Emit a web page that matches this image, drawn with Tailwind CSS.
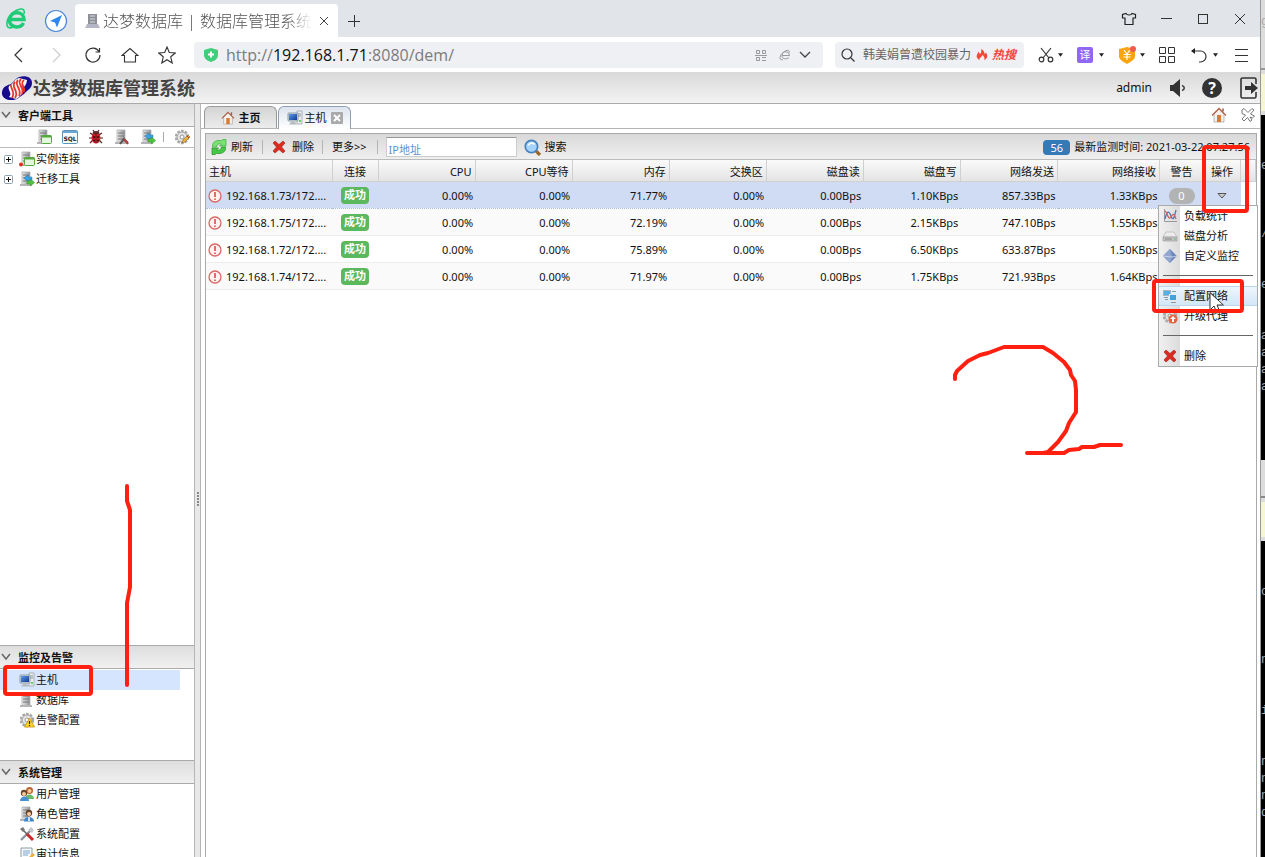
<!DOCTYPE html>
<html lang="zh-CN">
<head>
<meta charset="utf-8">
<title>达梦数据库 | 数据库管理系统</title>
<script src="https://cdn.jsdelivr.net/npm/@tailwindcss/browser@4"></script>
</head>
<body class="flex h-screen overflow-hidden bg-white font-['Noto_Sans','Noto_Sans_CJK_SC',sans-serif] text-[11px] leading-4 text-[#111]">

<svg class="absolute size-0" aria-hidden="true">
  <defs>
    <linearGradient id="steel" x1="0" x2="1"><stop offset="0" stop-color="#e8e8e8"/><stop offset="1" stop-color="#8e9297"/></linearGradient>
    <linearGradient id="screen" x1="0" x2="1" y1="0" y2="1"><stop offset="0" stop-color="#5b9be8"/><stop offset="1" stop-color="#123a94"/></linearGradient>
  </defs>
  <symbol id="server" viewBox="0 0 16 16"><path d="M3 1h8v13H3z" fill="url(#steel)" stroke="#a5a8ac" stroke-width=".7"/><path d="M4 4h6M4 7h6M4 10h6" stroke="#777" stroke-width="1"/><path d="M1 14h12" stroke="#b5b5b5" stroke-width="2"/></symbol>
  <symbol id="server-window" viewBox="0 0 16 16"><use href="#server"/><rect x="5.500" y="6.500" width="10" height="8" rx="1" fill="#e4f6df" stroke="#54a83c"/><path d="M5.500 7.500h10" stroke="#54a83c" stroke-width="2"/></symbol>
  <symbol id="server-window-off" viewBox="0 0 16 16"><use href="#server-window"/><circle cx="2" cy="13.500" r="2" fill="#e0301e"/></symbol>
  <symbol id="server-move" viewBox="0 0 16 16"><use href="#server"/><path d="M5 7l4-3v2h4v3H9v2z" fill="#3ba4e4" stroke="#1c79b8" stroke-width=".5"/><path d="M15.500 11.500l-4-3.500v2H8v3h3.500v2z" fill="#4fc63d" stroke="#2b8e20" stroke-width=".5"/></symbol>
  <symbol id="server-tool" viewBox="0 0 16 16"><use href="#server"/><path d="M6 15l4-5 4 4" fill="none" stroke="#555" stroke-width="2"/><path d="M10 10l4 5" stroke="#b53c35" stroke-width="2"/></symbol>
  <symbol id="sql" viewBox="0 0 16 16"><rect x=".5" y="1.500" width="15" height="13" rx="1" fill="#f4f8fb" stroke="#5f93b6"/><path d="M1 3h14" stroke="#69a7d4" stroke-width="2"/><text x="8" y="11.500" font-size="6" font-weight="700" text-anchor="middle" fill="#222" font-family="DejaVu Sans, sans-serif">SQL</text></symbol>
  <symbol id="bug" viewBox="0 0 16 16"><path d="M2 4l3 2M14 4l-3 2M1 9h14M2 14l3-3M14 14l-3-3M5 1l2 3M11 1L9 4" stroke="#5a2020" stroke-width="1.200"/><ellipse cx="8" cy="9" rx="4.500" ry="5.500" fill="#c9202a"/><path d="M4.500 5a3.500 3 0 0 1 7 0z" fill="#5d2b2b"/><path d="M8 5v9" stroke="#681016"/><circle cx="6" cy="8" r="1" fill="#350808"/><circle cx="10" cy="8" r="1" fill="#350808"/><circle cx="6" cy="11.500" r="1" fill="#350808"/><circle cx="10" cy="11.500" r="1" fill="#350808"/></symbol>
  <symbol id="gear" viewBox="0 0 16 16"><circle cx="8" cy="8" r="6" fill="none" stroke="#a9a9a9" stroke-width="2.500" stroke-dasharray="2.600 1.200"/><circle cx="8" cy="8" r="5" fill="#e5e5e5" stroke="#a1a1a1"/><circle cx="8" cy="8" r="2" fill="#fff" stroke="#999"/></symbol>
  <symbol id="gear-edit" viewBox="0 0 16 16"><use href="#gear"/><path d="M8 14l1-3 5-5 2 2-5 5z" fill="#e9b13f" stroke="#8d6724" stroke-width=".6"/><path d="M13 7l2 2" stroke="#c33" stroke-width="1"/></symbol>
  <symbol id="gear-warn" viewBox="0 0 16 16"><use href="#gear"/><path d="M10.500 6l5 9h-10z" fill="#ffd52e" stroke="#c98d08" stroke-width=".8"/><path d="M10.500 9v3M10.500 13v1" stroke="#222" stroke-width="1.200"/></symbol>
  <symbol id="host" viewBox="0 0 16 16"><path d="M10 1h5v13h-5z" fill="#e9edf0" stroke="#9da5aa" stroke-width=".8"/><path d="M11 4h3M11 6h3" stroke="#8e9ba5"/><circle cx="13" cy="11" r="1" fill="#3c3"/><rect x="1" y="3" width="10" height="8" rx=".8" fill="#d6dde4" stroke="#7c8590" stroke-width=".8"/><path d="M2 4h8v6H2z" fill="url(#screen)"/><path d="M4 12h4l2 2.500H2z" fill="#b3bac0"/></symbol>
  <symbol id="home" viewBox="0 0 16 16"><path d="M3 7l5-5 5 5v8H3z" fill="#f4f1ed" stroke="#aaa" stroke-width=".8"/><path d="M6 8h4v7H6z" fill="#d97b32"/><path d="M1 8.500l7-7 7 7" fill="none" stroke="#b06048" stroke-width="1.300"/><path d="M12 1.500v3" stroke="#9a5540" stroke-width="1.500"/></symbol>
  <symbol id="cross" viewBox="0 0 16 16"><path d="M2 4l2-2 4 3.500L12 2l2 2-3.500 4 3.500 4-2 2-4-3.500L4 14l-2-2 3.500-4z" fill="#d92b1f" stroke="#a51c13" stroke-width=".6"/></symbol>
  <symbol id="refresh" viewBox="0 0 16 16"><path d="M1.500 8V6.500C1.500 3 5 1.500 8 1.500h2.500L12 .5h3V7H8.500l2-2C8 4.500 6 5 5.500 8z" fill="#7be272" stroke="#3aac3a" stroke-width=".7"/><path d="M14.500 8v1.500c0 3.500-3.500 5-6.500 5H5.500L4 15.500H1V9h6.500l-2 2c2.500.5 4.500 0 5-3z" fill="#45c843" stroke="#219023" stroke-width=".7"/></symbol>
  <symbol id="magnify" viewBox="0 0 16 16"><path d="M11 11l4 4" stroke="#9c6426" stroke-width="3"/><circle cx="7" cy="7" r="5.800" fill="#a6d4fa" stroke="#4581bd" stroke-width="1.600"/><path d="M4 6c1-2 4-3 6-1" stroke="#fff" fill="none" stroke-width="1.500"/></symbol>
  <symbol id="alert" viewBox="0 0 14 14"><circle cx="7" cy="7" r="6" fill="#fff3f2" stroke="#dc6663" stroke-width="1.300"/><path d="M7 3v5M7 9.500V11" stroke="#dc5552" stroke-width="1.700"/></symbol>
  <symbol id="users" viewBox="0 0 16 16"><circle cx="10.500" cy="4.500" r="3.500" fill="#b9622e"/><path d="M6 13c0-6 9-6 9 0z" fill="#69b96b"/><circle cx="10.500" cy="5" r="2" fill="#f7cb9e"/><circle cx="5" cy="7" r="3.200" fill="#6b4528"/><circle cx="5" cy="8" r="2" fill="#f7cb9e"/><path d="M1 15c0-6 9-6 9 0z" fill="#4791d3"/></symbol>
  <symbol id="role" viewBox="0 0 16 16"><use href="#server"/><circle cx="10" cy="7" r="3.200" fill="#674028"/><circle cx="10" cy="8" r="2" fill="#f7cb9e"/><path d="M5 15.500c0-6 10-6 10 0z" fill="#3f86cb"/><path d="M10 11v4" stroke="#fff" stroke-width="1.500"/></symbol>
  <symbol id="tools" viewBox="0 0 16 16"><path d="M2 14L12 4" stroke="#8e949a" stroke-width="2.400"/><path d="M9 4l3-3 3 3-2 3z" fill="#c3c8cc"/><path d="M4 4l5 5" stroke="#666" stroke-width="1.500"/><path d="M8 8l6 6" stroke="#c9282d" stroke-width="3"/><path d="M1 3l3-2 2 3-2 2z" fill="#777"/></symbol>
  <symbol id="audit" viewBox="0 0 16 16"><path d="M2 2h11v13H2z" fill="#f8fafc" stroke="#8b98a5"/><path d="M4 5h7M4 7h7M4 9h5" stroke="#77a5d1"/><path d="M8 13l6-6 2 2-6 5z" fill="#e8b242"/></symbol>
  <symbol id="chart" viewBox="0 0 16 16"><path d="M2.500 1v12.500H15" fill="none" stroke="#999"/><path d="M3 11C5 2 7 3 9 8s3 3 5-6" fill="none" stroke="#4c78b9" stroke-width="1.300"/><path d="M3 3c2 1 3 8 5 7s3-8 6 1" fill="none" stroke="#d65c51" stroke-width="1.300"/></symbol>
  <symbol id="disk" viewBox="0 0 16 16"><path d="M4 4h8l3 5H1z" fill="#ececec" stroke="#b5b5b5" stroke-width=".7"/><path d="M1 9h14v4H1z" fill="#c2c2c5" stroke="#9f9fa2" stroke-width=".7"/><path d="M3 11h7" stroke="#888"/><circle cx="13" cy="11" r=".8" fill="#5b5"/></symbol>
  <symbol id="diamond" viewBox="0 0 16 16"><path d="M8 1l7 7-7 7-7-7z" fill="#6f87b8" stroke="#a9b8d5"/><path d="M8 1l2 8-2 6-7-7z" fill="#92a6cf"/><path d="M1 8l9 1 5-1" stroke="#dce4f2" fill="none" stroke-width=".7"/></symbol>
  <symbol id="network" viewBox="0 0 16 16"><rect x="1.500" y="2.500" width="7" height="5" fill="#4fb2e8" stroke="#a9b3bb"/><rect x="7.500" y="6.500" width="7" height="6" fill="#3fa3e0" stroke="#e4e9ec"/><path d="M2 9.500h4M9 14.500h5M3 11.500h3M10 3.500h4" stroke="#8d979f"/></symbol>
  <symbol id="agent" viewBox="0 0 16 16"><use href="#gear"/><circle cx="11" cy="11" r="4.500" fill="#e3643b"/><path d="M11 8l3 3h-2v3h-2v-3H8z" fill="#fff"/></symbol>
  <symbol id="chevron" viewBox="0 0 10 10"><path d="M1 2l4 5 4-5" fill="none" stroke="#666" stroke-width="1.500"/></symbol>
  <symbol id="caret" viewBox="0 0 6 4"><path d="M0 0h6L3 4z" fill="#222"/></symbol>
  <symbol id="plusbox" viewBox="0 0 9 9"><rect x=".5" y=".5" width="8" height="8" rx="1" fill="#fff" stroke="#8aa0ad"/><path d="M2 4.500h5M4.500 2v5" stroke="#111"/></symbol>
</svg>

<div class="flex min-w-0 flex-1 flex-col">

  <!-- Browser tab strip -->
  <div class="flex h-[37px] shrink-0 items-center bg-[#e1e4e9]">
    <svg class="ml-1 size-6 shrink-0" viewBox="0 0 24 24" fill="none"><path d="M5.500 12.500h14.500C20 4 6.500 3 5.500 13c-.5 8 11 9 14 3" stroke="#1ecb76" stroke-width="3.500"/><path d="M20 7C22-1 13 2 8 6 1 13 1 24 9 20" stroke="#1ecb76" stroke-width="1.600"/></svg>
    <svg class="mt-1 ml-4 size-6 shrink-0" viewBox="0 0 24 24"><circle cx="12" cy="12" r="10.500" fill="#fff" stroke="#4a88d8" stroke-width="1.200"/><path d="M18 6l-12 6 5 1.500 2 5z" fill="#2f86ee"/></svg>
    <div class="ml-[7px] flex h-[33px] w-[263px] items-center self-end rounded-t-sm bg-white pr-1.5 pl-2">
      <svg class="size-5 shrink-0" viewBox="0 0 20 20"><path d="M5 3h9v10H5z" fill="#8d8f99"/><path d="M7 5h5M7 8h5M7 11h5" stroke="#ddd"/><path d="M4 13h11l2 4H2z" fill="#b4b6c5"/></svg>
      <span class="flex-1 overflow-hidden text-[16px] leading-6 font-light whitespace-nowrap text-[#555] [mask-image:linear-gradient(to_right,black_88%,transparent)]">达梦数据库 | 数据库管理系统</span>
      <button class="ml-1 flex size-4 items-center justify-center" aria-label="关闭标签页"><svg class="size-2" viewBox="0 0 8 8"><path d="M0 0l8 8M8 0L0 8" stroke="#444"/></svg></button>
    </div>
    <button class="mt-1 ml-2 size-4" aria-label="新标签页"><svg class="size-4" viewBox="0 0 16 16"><path d="M2 8.500h12M8.500 2v12" stroke="#333"/></svg></button>
    <div class="mr-3 ml-auto flex items-center gap-[21px]">
      <button aria-label="皮肤"><svg class="size-4" viewBox="0 0 16 16"><path d="M5 2.500c1 2 5 2 6 0l3.500 1v3.500h-2.500v6.500h-8V7H1.500V3.500z" fill="none" stroke="#222" stroke-width="1.200"/></svg></button>
      <button aria-label="最小化"><svg class="size-4" viewBox="0 0 16 16"><path d="M3 7.500h11" stroke="#333"/></svg></button>
      <button aria-label="最大化"><svg class="size-4" viewBox="0 0 16 16"><rect x="3.500" y="3.500" width="9" height="9" fill="none" stroke="#333"/></svg></button>
      <button aria-label="关闭"><svg class="size-4" viewBox="0 0 16 16"><path d="M3 3l10 10M13 3L3 13" stroke="#333"/></svg></button>
    </div>
  </div>

  <!-- Browser navigation -->
  <div class="flex h-[35px] shrink-0 items-center bg-white pr-2.5 pl-2.5">
    <div class="flex items-center gap-[19px]">
      <button aria-label="后退"><svg class="size-[18px]" viewBox="0 0 18 18" fill="none"><path d="M12 2L5 9l7 7" stroke="#333" stroke-width="1.200"/></svg></button>
      <button aria-label="前进"><svg class="size-[18px]" viewBox="0 0 18 18" fill="none"><path d="M6 2l7 7-7 7" stroke="#ccc" stroke-width="1.200"/></svg></button>
      <button aria-label="刷新页面"><svg class="size-[18px]" viewBox="0 0 18 18" fill="none"><path d="M15 5.500A7 7 0 1 0 16 9M15.500 2v4h-4" stroke="#333" stroke-width="1.200"/></svg></button>
      <button aria-label="浏览器主页"><svg class="size-[18px]" viewBox="0 0 18 18" fill="none"><path d="M1 9.500l8-7 8 7h-2.500V16h-11V9.500z" stroke="#333" stroke-width="1.100"/></svg></button>
      <button aria-label="收藏"><svg class="size-[18px]" viewBox="0 0 18 18" fill="none"><path d="M9 1l2.300 5.500 6 .5-4.600 3.800L14.200 17 9 13.700 3.800 17l1.500-6.200L.7 7l6-.5z" stroke="#333" stroke-width="1.100"/></svg></button>
    </div>
    <div class="ml-[18px] flex h-[26px] min-w-0 flex-1 items-center rounded bg-[#eff0f4] pr-3 pl-2.5">
      <svg class="size-[14px] shrink-0" viewBox="0 0 14 14"><path d="M0 2L7 0l7 2v5c0 4-4 6-7 7-3-1-7-3-7-7z" fill="#3fcf7c"/><path d="M4 6.500h6M7 3.500v6" stroke="#fff" stroke-width="2"/></svg>
      <div role="textbox" contenteditable="true" spellcheck="false" aria-label="地址栏" class="ml-2 flex-1 font-['Open_Sans',sans-serif] text-[16px] leading-6 whitespace-nowrap text-[#7b7b7b] outline-none">http://<span class="text-[#111]">192.168.1.71</span>:8080/dem/</div>
      <div class="flex items-center gap-3">
        <svg class="size-3" viewBox="0 0 12 12" fill="none" stroke="#999"><path d="M1.500 1.500h3v3h-3zM7.500 1.500h3v3h-3zM1.500 8.500h3v3h-3zM7 8.500h4M7 11.500h4M0 6.500h12"/></svg>
        <svg class="size-3" viewBox="0 0 12 12" fill="none" stroke="#999"><path d="M3 6.500h7.500C10 1.500 3 1.500 3 6.500c0 4 5 4 7 2M10 4c2-6-9-1-9 5 0 2 2 2 3 1.500"/></svg>
        <button class="-ml-1" aria-label="展开地址"><svg class="size-3" viewBox="0 0 12 12" fill="none"><path d="M1 3l5 5 5-5" stroke="#444" stroke-width="1.300"/></svg></button>
      </div>
    </div>
    <label class="ml-3 flex h-[26px] w-[189px] items-center rounded bg-[#eff0f4] px-1.5">
      <svg class="size-[14px] shrink-0" viewBox="0 0 14 14" fill="none" stroke="#333" stroke-width="1.200"><circle cx="6" cy="6" r="5"/><path d="M10 10l3.500 3.500"/></svg>
      <input aria-label="搜索网页" class="ml-2 w-[109px] bg-transparent text-[12px] text-[#666] outline-none" value="韩美娟曾遭校园暴力">
      <svg class="mx-1 size-3 shrink-0" viewBox="0 0 14 14"><path d="M4 13C-2 9 2 6 3 3l1.500 3C6 5 6.500 2 6 0c3 1 4 4 4 6l1.500-2c3 4 2 7-2 9 1-3 0-4-2-6-1 3-4 3-3.500 6z" fill="#f4483b"/></svg>
      <span class="text-[12px] font-bold text-[#f4483b] italic">热搜</span>
    </label>
    <div class="ml-3.5 flex items-center gap-[14px]">
      <button class="flex items-center gap-1" aria-label="截图"><svg class="size-4" viewBox="0 0 16 16" fill="none" stroke="#333" stroke-width="1.200"><path d="M3 1l8 10M13 1L5 11"/><circle cx="3.500" cy="12.500" r="2.300"/><circle cx="12.500" cy="12.500" r="2.300"/></svg><svg class="h-1 w-[5px]"><use href="#caret"/></svg></button>
      <button class="flex items-center gap-1.5" aria-label="翻译"><span class="flex size-4 items-center justify-center rounded-xs bg-[#8f66f5] text-[11px] text-white">译</span><svg class="h-1 w-[5px]"><use href="#caret"/></svg></button>
      <button class="flex items-center gap-1" aria-label="优惠"><svg class="h-[18px] w-[18px]" viewBox="0 0 18 18"><path d="M1 3l8-2 8 2v7c0 4-5 6-8 8-3-2-8-4-8-8z" fill="#fca40b"/><path d="M6 4l3 4 3-4M5.500 8.500h7M5.500 11h7M9 8v6" stroke="#fff" fill="none" stroke-width="1.200"/><circle cx="15" cy="3" r="3" fill="#f55a52"/></svg><svg class="h-1 w-[5px]"><use href="#caret"/></svg></button>
      <button aria-label="扩展"><svg class="size-4" viewBox="0 0 16 16" fill="none" stroke="#333"><path d="M.5.500h6v6h-6zM9.500.500h6v6h-6zM.5 9.500h6v6h-6zM9.500 9.500h6v6h-6z"/></svg></button>
      <button class="ml-0.5 flex items-center gap-1.5" aria-label="撤销"><svg class="size-4" viewBox="0 0 16 16" fill="none"><path d="M2 4h7.500a5 5 0 0 1 0 11H8" stroke="#333" stroke-width="1.200"/><path d="M0 4l4-3v6z" fill="#222"/></svg><svg class="h-1 w-[5px]"><use href="#caret"/></svg></button>
      <button class="ml-0.5" aria-label="菜单"><svg class="size-4" viewBox="0 0 16 16" stroke="#333"><path d="M1 2.500h13M1 8.500h13M1 14.500h13"/></svg></button>
    </div>
  </div>

  <!-- Application header -->
  <header class="flex h-8 shrink-0 items-center border-b border-[#aaa] bg-linear-to-b from-[#d9d9d9] to-[#f3f3f3] pl-px">
    <svg class="h-6 w-8 shrink-0" viewBox="0 0 32 24"><path d="M15 3C19-1 31-1 31 7c0 6-5 7-8 11l-7 5C9 26 0 23 1 16c1-6 6-7 9-8z" fill="#180b8e"/><path d="M8 10C13 8 12 4 18 2l8 2c-1 9-7 7-4 13-3 2-4 5-7 6l-7-2c4-4-2-7 0-11z" fill="#fdf6f4"/><path d="M10 9c-1 3 5 7 1 13M14 6c-5 5 5 9 0 16M17 4c-5 5 5 9 1 16M20 3c-5 5 4 8 1 15M23 4c-5 4 2 7 0 12" fill="none" stroke="#e5372d" stroke-width="1.800"/></svg>
    <h1 class="text-[18px] leading-6 font-bold text-[#444]">达梦数据库管理系统</h1>
    <div class="mr-0.5 ml-auto flex items-center">
      <span class="text-[12px]">admin</span>
      <button class="ml-4" aria-label="声音"><svg class="size-5" viewBox="0 0 20 20"><path d="M2 7h3l7-6v18l-7-6H2z" fill="#333"/><path d="M14 7.500c3 1 3 4 0 5" fill="none" stroke="#444" stroke-width="1.600"/></svg></button>
      <button class="ml-3.5 flex size-5 items-center justify-center rounded-full bg-[#333] text-[16px] leading-5 font-bold text-white" aria-label="帮助">?</button>
      <button class="ml-4" aria-label="退出"><svg class="h-[22px] w-5" viewBox="0 0 20 22"><path d="M18 7V2.500a1.500 1.500 0 0 0-1.500-1.500h-12A1.500 1.500 0 0 0 3 2.500v17A1.500 1.500 0 0 0 4.500 21h12a1.500 1.500 0 0 0 1.500-1.500V15" fill="none" stroke="#333" stroke-width="1.600"/><path d="M7 9h6V5l7 6-7 6v-4H7z" fill="#333"/></svg></button>
    </div>
  </header>

  <div class="flex min-h-0 flex-1">
    <!-- Sidebar -->
    <nav class="flex w-[194px] shrink-0 flex-col">
      <h2 class="flex h-[23px] shrink-0 items-center border-b border-[#aaa] bg-linear-to-b from-[#dedede] to-[#f0f0f0] pt-0.5 pl-px font-bold"><svg class="mr-[7px] mb-0.5 size-2.5"><use href="#chevron"/></svg>客户端工具</h2>
      <div class="flex h-[21px] shrink-0 items-center justify-end gap-[10px] border-b border-[#bbb] pr-1">
        <button aria-label="实例"><svg class="size-4"><use href="#server-window"/></svg></button>
        <button aria-label="SQL"><svg class="size-4"><use href="#sql"/></svg></button>
        <button aria-label="调试"><svg class="size-4"><use href="#bug"/></svg></button>
        <button aria-label="配置实例"><svg class="size-4"><use href="#server-tool"/></svg></button>
        <button aria-label="迁移"><svg class="size-4"><use href="#server-move"/></svg></button>
        <span class="ml-[-3px] h-2.5 w-px bg-[#aaa]"></span>
        <button aria-label="设置"><svg class="size-4"><use href="#gear-edit"/></svg></button>
      </div>
      <div class="min-h-0 flex-1 pt-px">
        <a href="#instance" class="flex h-5 items-center pl-1"><svg class="size-[9px]"><use href="#plusbox"/></svg><svg class="mr-px ml-1.5 size-4"><use href="#server-window-off"/></svg>实例连接</a>
        <a href="#migrate" class="flex h-5 items-center pl-1"><svg class="size-[9px]"><use href="#plusbox"/></svg><svg class="mr-px ml-1.5 size-4"><use href="#server-move"/></svg>迁移工具</a>
      </div>
      <h2 class="flex h-6 shrink-0 items-center border-y border-[#aaa] bg-linear-to-b from-[#dedede] to-[#f0f0f0] pt-0.5 pl-px font-bold"><svg class="mr-[7px] mb-0.5 size-2.5"><use href="#chevron"/></svg>监控及告警</h2>
      <div class="h-[91px] shrink-0 pt-px">
        <a href="#host" class="mr-3.5 flex h-5 items-center bg-[#d5e5fd] pl-[19px]"><svg class="mr-px size-4"><use href="#host"/></svg>主机</a>
        <a href="#database" class="flex h-5 items-center pl-[19px]"><svg class="mr-px size-4"><use href="#server"/></svg>数据库</a>
        <a href="#alarm" class="flex h-5 items-center pl-[19px]"><svg class="mr-px size-4"><use href="#gear-warn"/></svg>告警配置</a>
      </div>
      <h2 class="flex h-6 shrink-0 items-center border-y border-[#aaa] bg-linear-to-b from-[#dedede] to-[#f0f0f0] pt-0.5 pl-px font-bold"><svg class="mr-[7px] mb-0.5 size-2.5"><use href="#chevron"/></svg>系统管理</h2>
      <div class="h-[73px] shrink-0 overflow-hidden">
        <a href="#users" class="flex h-5 items-center pl-[19px]"><svg class="mr-px size-4"><use href="#users"/></svg>用户管理</a>
        <a href="#roles" class="flex h-5 items-center pl-[19px]"><svg class="mr-px size-4"><use href="#role"/></svg>角色管理</a>
        <a href="#config" class="flex h-5 items-center pl-[19px]"><svg class="mr-px size-4"><use href="#tools"/></svg>系统配置</a>
        <a href="#audit" class="flex h-5 items-center pl-[19px]"><svg class="mr-px size-4"><use href="#audit"/></svg>审计信息</a>
      </div>
    </nav>

    <!-- Splitter -->
    <div class="flex w-[7px] shrink-0 flex-col items-center justify-center gap-px border-x border-[#b5b5b5] bg-[#e8e8e8] pt-9">
      <i class="size-0.5 bg-[#888]"></i><i class="size-0.5 bg-[#888]"></i><i class="size-0.5 bg-[#888]"></i><i class="size-0.5 bg-[#888]"></i><i class="size-0.5 bg-[#888]"></i>
    </div>

    <!-- Workspace -->
    <main class="flex min-w-0 flex-1 flex-col">
      <div class="flex h-[25px] shrink-0 items-end border-b border-[#b5b5b5] pl-[3px]">
        <button class="flex h-[22px] w-[73px] items-center justify-center gap-1 rounded-t-md border border-b-0 border-[#999] bg-linear-to-b from-[#d4d4d4] to-[#ececec] font-bold"><svg class="size-[14px]"><use href="#home"/></svg>主页</button>
        <div class="-mb-px ml-px flex h-[23px] w-[73px] items-center justify-center gap-1 rounded-t-md border border-b-0 border-[#8fa0b5] bg-linear-to-b from-[#dde4ee] to-white"><button class="flex items-center gap-0.5"><svg class="size-4"><use href="#host"/></svg>主机</button><button aria-label="关闭主机"><svg class="size-3" viewBox="0 0 12 12"><rect width="12" height="12" rx="1" fill="#aaa"/><path d="M3 3l6 6M9 3L3 9" stroke="#fff" stroke-width="2"/></svg></button></div>
        <div class="mr-[5px] mb-[5px] ml-auto flex items-center gap-[14px]">
          <button aria-label="主页"><svg class="size-4"><use href="#home"/></svg></button>
          <button aria-label="全部关闭"><svg class="size-[14px]" viewBox="0 0 14 14" fill="#fff" stroke="#777"><path d="M1 2l2-1.500 4 4 4-4L13 2 9.500 6 13.500 8l-2 2L9 9l2 3-2 1.500L6.500 9.500 3 13l-2-2 3.500-4L1 5.500z"/></svg></button>
        </div>
      </div>

      <section class="relative mt-1 mr-[3px] ml-1 flex min-h-0 flex-1 flex-col border border-b-0 border-[#aaa]">
        <div class="flex h-[26px] shrink-0 items-center border-b border-[#bbb] bg-linear-to-b from-[#d9d9d9] to-[#efefef] pt-px pr-1.5 pl-[5px]">
          <button class="flex items-center gap-1"><svg class="size-4"><use href="#refresh"/></svg>刷新</button>
          <span class="mr-2 ml-[9px] h-[14px] w-px bg-[#b5b5b5]"></span>
          <button class="flex items-center gap-[5px]"><svg class="size-4"><use href="#cross"/></svg>删除</button>
          <span class="mr-[9px] ml-2 h-[14px] w-px bg-[#b5b5b5]"></span>
          <button>更多&gt;&gt;</button>
          <span class="mr-2 ml-2.5 h-[14px] w-px bg-[#b5b5b5]"></span>
          <input aria-label="IP地址" placeholder="IP地址" class="h-5 w-[131px] border border-t-[#999] border-r-[#ccc] border-b-[#ccc] border-l-[#ccc] bg-white px-0.5 pt-1 leading-3 outline-none placeholder:text-[#5b93ce]">
          <button class="ml-[7px] flex items-center gap-1"><svg class="size-[17px]"><use href="#magnify"/></svg>搜索</button>
          <span class="mr-1 ml-auto h-[15px] w-[27px] rounded bg-[#337ab7] text-center leading-[15px] text-white">56</span>
          <span class="whitespace-nowrap">最新监测时间: 2021-03-22 07:27:56</span>
        </div>

        <table class="w-full table-fixed border-collapse text-right whitespace-nowrap">
          <colgroup><col class="w-[126px]"><col class="w-[46px]"><col><col><col><col><col><col><col><col class="w-[102px]"><col class="w-[44px]"><col class="w-[37px]"><col class="w-[15px]"></colgroup>
          <thead>
            <tr class="h-[21px] bg-linear-to-b from-[#fafafa] to-[#e4e4e4] *:border-r *:border-b *:border-[#d0d0d0] *:p-0 *:px-[3px] *:pt-[3px] *:font-normal">
              <th class="text-left">主机</th><th class="text-center">连接</th><th>CPU</th><th>CPU等待</th><th>内存</th><th>交换区</th><th>磁盘读</th><th>磁盘写</th><th>网络发送</th><th>网络接收</th><th class="text-center">警告</th><th class="text-center">操作</th><th></th>
            </tr>
          </thead>
          <tbody>
            <tr class="h-[27px] border-b border-dotted border-[#a9bfe0] bg-linear-to-b from-[#cfdcf4] to-[#cfdcf4] *:p-0 *:px-0.5 *:pt-0.5">
              <td><span class="flex items-center gap-1"><svg class="size-[14px]"><use href="#alert"/></svg>192.168.1.73/172....</span></td><td class="text-center"><span class="inline-block h-[17px] w-7 rounded-sm bg-[#5cb85c] font-bold text-white">成功</span></td><td>0.00%</td><td>0.00%</td><td>71.77%</td><td>0.00%</td><td>0.00Bps</td><td>1.10KBps</td><td>857.33Bps</td><td>1.33KBps</td><td class="text-center"><span class="inline-block h-4 w-[26px] rounded-full bg-[#b3b3b3] text-center text-white">0</span></td><td><button class="mx-auto block" aria-label="操作菜单"><svg class="h-1.5 w-2.5" viewBox="0 0 10 6"><path d="M1 .5h8L5 5z" fill="#ccc" stroke="#555"/></svg></button></td><td class="bg-white"></td>
            </tr>
            <tr class="h-[27px] border-b border-[#ededed] bg-[#fafafa] *:p-0 *:px-0.5 *:pt-0.5">
              <td><span class="flex items-center gap-1"><svg class="size-[14px]"><use href="#alert"/></svg>192.168.1.75/172....</span></td><td class="text-center"><span class="inline-block h-[17px] w-7 rounded-sm bg-[#5cb85c] font-bold text-white">成功</span></td><td>0.00%</td><td>0.00%</td><td>72.19%</td><td>0.00%</td><td>0.00Bps</td><td>2.15KBps</td><td>747.10Bps</td><td>1.55KBps</td><td></td><td></td><td></td>
            </tr>
            <tr class="h-[27px] border-b border-[#ededed] *:p-0 *:px-0.5 *:pt-0.5">
              <td><span class="flex items-center gap-1"><svg class="size-[14px]"><use href="#alert"/></svg>192.168.1.72/172....</span></td><td class="text-center"><span class="inline-block h-[17px] w-7 rounded-sm bg-[#5cb85c] font-bold text-white">成功</span></td><td>0.00%</td><td>0.00%</td><td>75.89%</td><td>0.00%</td><td>0.00Bps</td><td>6.50KBps</td><td>633.87Bps</td><td>1.50KBps</td><td></td><td></td><td></td>
            </tr>
            <tr class="h-[27px] border-b border-[#ededed] bg-[#fafafa] *:p-0 *:px-0.5 *:pt-0.5">
              <td><span class="flex items-center gap-1"><svg class="size-[14px]"><use href="#alert"/></svg>192.168.1.74/172....</span></td><td class="text-center"><span class="inline-block h-[17px] w-7 rounded-sm bg-[#5cb85c] font-bold text-white">成功</span></td><td>0.00%</td><td>0.00%</td><td>71.97%</td><td>0.00%</td><td>0.00Bps</td><td>1.75KBps</td><td>721.93Bps</td><td>1.64KBps</td><td></td><td></td><td></td>
            </tr>
          </tbody>
        </table>

        <!-- Row action menu -->
        <div role="menu" class="absolute top-[71px] right-[-2px] w-[100px] border border-[#aaa] bg-linear-to-r from-[#f0f0f0] via-[#dcdcdc] via-[21px] to-white to-[21px]">
          <button role="menuitem" class="flex h-5 w-full items-center gap-1.5 pl-[3px]"><svg class="size-4"><use href="#chart"/></svg>负载统计</button>
          <button role="menuitem" class="flex h-5 w-full items-center gap-1.5 pl-[3px]"><svg class="size-4"><use href="#disk"/></svg>磁盘分析</button>
          <button role="menuitem" class="flex h-5 w-full items-center gap-1.5 pl-[3px]"><svg class="size-4"><use href="#diamond"/></svg>自定义监控</button>
          <hr class="mx-1 mt-[9px] mb-2.5 border-[#666]">
          <button role="menuitem" class="flex h-5 w-full items-center gap-1.5 border-y border-[#bcd7ec] bg-linear-to-b from-[#eef6fe] to-[#d3e6f8] pl-[3px]"><svg class="size-4"><use href="#network"/></svg>配置网络</button>
          <button role="menuitem" class="flex h-5 w-full items-center gap-1.5 pl-[3px]"><svg class="size-4"><use href="#agent"/></svg>升级代理</button>
          <hr class="mx-1 mt-[9px] mb-2.5 border-[#666]">
          <button role="menuitem" class="flex h-5 w-full items-center gap-1.5 pl-[3px]"><svg class="size-4"><use href="#cross"/></svg>删除</button>
        </div>
      </section>
    </main>
  </div>
</div>

<!-- Terminal window showing behind the browser -->
<aside class="flex w-[5px] shrink-0 flex-col overflow-hidden border-l border-[#999] bg-black font-['Liberation_Mono',monospace] text-[12px] leading-[17px] text-[#aaa]">
  <div class="h-[70px] shrink-0 border-b-2 border-[#999] bg-[#dcdcdc] pt-3.5">g</div>
  <div class="h-[45px] shrink-0 border-y-4 border-[#ddd] bg-[#f7f6d3]"></div>
  <pre class="h-[345px] shrink-0 pt-[43px] font-[inherit]">e



/


e


a
a
a
a</pre>
  <div class="h-[38px] shrink-0 border-b-2 border-[#888] bg-[#dcdcdc]"></div>
  <div class="h-[43px] shrink-0 border-y-4 border-[#ddd] bg-[#f7f6d3]"></div>
  <pre class="min-h-0 flex-1 pt-[43px] font-[inherit]">o



n


i


n
n
n
d</pre>
</aside>

<!-- Hand-drawn markup and pointer -->
<svg class="pointer-events-none absolute top-0 left-0 h-[857px] w-[1265px]" viewBox="0 0 1265 857" fill="none" stroke="#ff2010" stroke-width="4" stroke-linecap="round" stroke-linejoin="round" aria-hidden="true">
  <path d="M1210 293v17l4-4 3 7 3-1-3-7h6z" fill="#fff" stroke="#333" stroke-width="1"/>
  <rect x="1204" y="147" width="43" height="64" rx="2"/>
  <rect x="1154" y="281" width="88" height="30" rx="2"/>
  <rect x="5" y="667" width="86" height="27" rx="2"/>
  <path d="M127 486v15l3 9v77l-3 16v82"/>
  <path d="M955 379v-4l2-4 11-10 12-6 8-2 16-6h39l10 6 11 9 6 8 1 5 4 6 1 9v22l-7 11-3 8-8 11-10 10-5 1h-16 37l5-3 10-1 3-2h12l6-2h21"/>
</svg>
</body>
</html>
